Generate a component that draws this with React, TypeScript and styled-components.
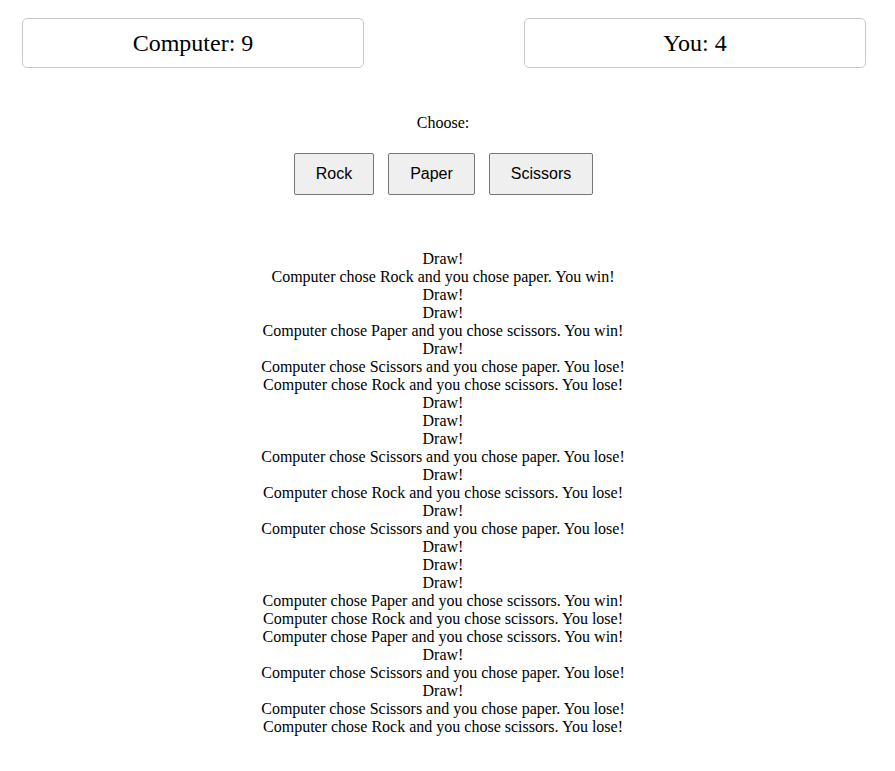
import React from "react";
import styled, { createGlobalStyle } from "styled-components";

const Global = createGlobalStyle`
  html, body { margin: 0; padding: 0; background: #fff; }
  body { font-family: "Liberation Serif", "Times New Roman", serif; color: #000; }
`;

const Page = styled.div`
  width: 886px;
  box-sizing: border-box;
  padding-top: 18px;
`;

const ScoreRow = styled.div`
  display: flex;
  justify-content: space-between;
  padding: 0 20px 0 22px;
`;

const ScoreBox = styled.div`
  width: 342px;
  height: 50px;
  box-sizing: border-box;
  border: 1px solid #c8c8c8;
  border-radius: 5px;
  display: flex;
  align-items: center;
  justify-content: center;
  font-family: "Liberation Serif", "Times New Roman", serif;
  font-size: 24px;
`;

const Prompt = styled.div`
  margin-top: 46px;
  text-align: center;
  font-size: 16px;
  line-height: 18px;
`;

const ButtonRow = styled.div`
  display: flex;
  justify-content: center;
  gap: 14px;
  margin-top: 21px;
  padding-left: 1px;
`;

const ChoiceButton = styled.button<{ $w: number }>`
  font-family: "Liberation Sans", Arial, sans-serif;
  font-size: 16px;
  width: ${(p) => p.$w}px;
  height: 42px;
  padding: 0;
  background: #efefef;
  border: 1px solid #767676;
  border-radius: 2px;
  color: #000;
  cursor: pointer;
`;

const Log = styled.div`
  margin-top: 55px;
  text-align: center;
  font-size: 16px;
  line-height: 18px;
`;

const LogLine = styled.div``;

const log = [
  "Draw!",
  "Computer chose Rock and you chose paper. You win!",
  "Draw!",
  "Draw!",
  "Computer chose Paper and you chose scissors. You win!",
  "Draw!",
  "Computer chose Scissors and you chose paper. You lose!",
  "Computer chose Rock and you chose scissors. You lose!",
  "Draw!",
  "Draw!",
  "Draw!",
  "Computer chose Scissors and you chose paper. You lose!",
  "Draw!",
  "Computer chose Rock and you chose scissors. You lose!",
  "Draw!",
  "Computer chose Scissors and you chose paper. You lose!",
  "Draw!",
  "Draw!",
  "Draw!",
  "Computer chose Paper and you chose scissors. You win!",
  "Computer chose Rock and you chose scissors. You lose!",
  "Computer chose Paper and you chose scissors. You win!",
  "Draw!",
  "Computer chose Scissors and you chose paper. You lose!",
  "Draw!",
  "Computer chose Scissors and you chose paper. You lose!",
  "Computer chose Rock and you chose scissors. You lose!",
];

export default function App() {
  return (
    <>
      <Global />
      <Page>
        <ScoreRow>
          <ScoreBox>Computer: 9</ScoreBox>
          <ScoreBox>You: 4</ScoreBox>
        </ScoreRow>
        <Prompt>Choose:</Prompt>
        <ButtonRow>
          <ChoiceButton $w={80}>Rock</ChoiceButton>
          <ChoiceButton $w={87}>Paper</ChoiceButton>
          <ChoiceButton $w={104}>Scissors</ChoiceButton>
        </ButtonRow>
        <Log>
          {log.map((l, i) => (
            <LogLine key={i}>{l}</LogLine>
          ))}
        </Log>
      </Page>
    </>
  );
}
